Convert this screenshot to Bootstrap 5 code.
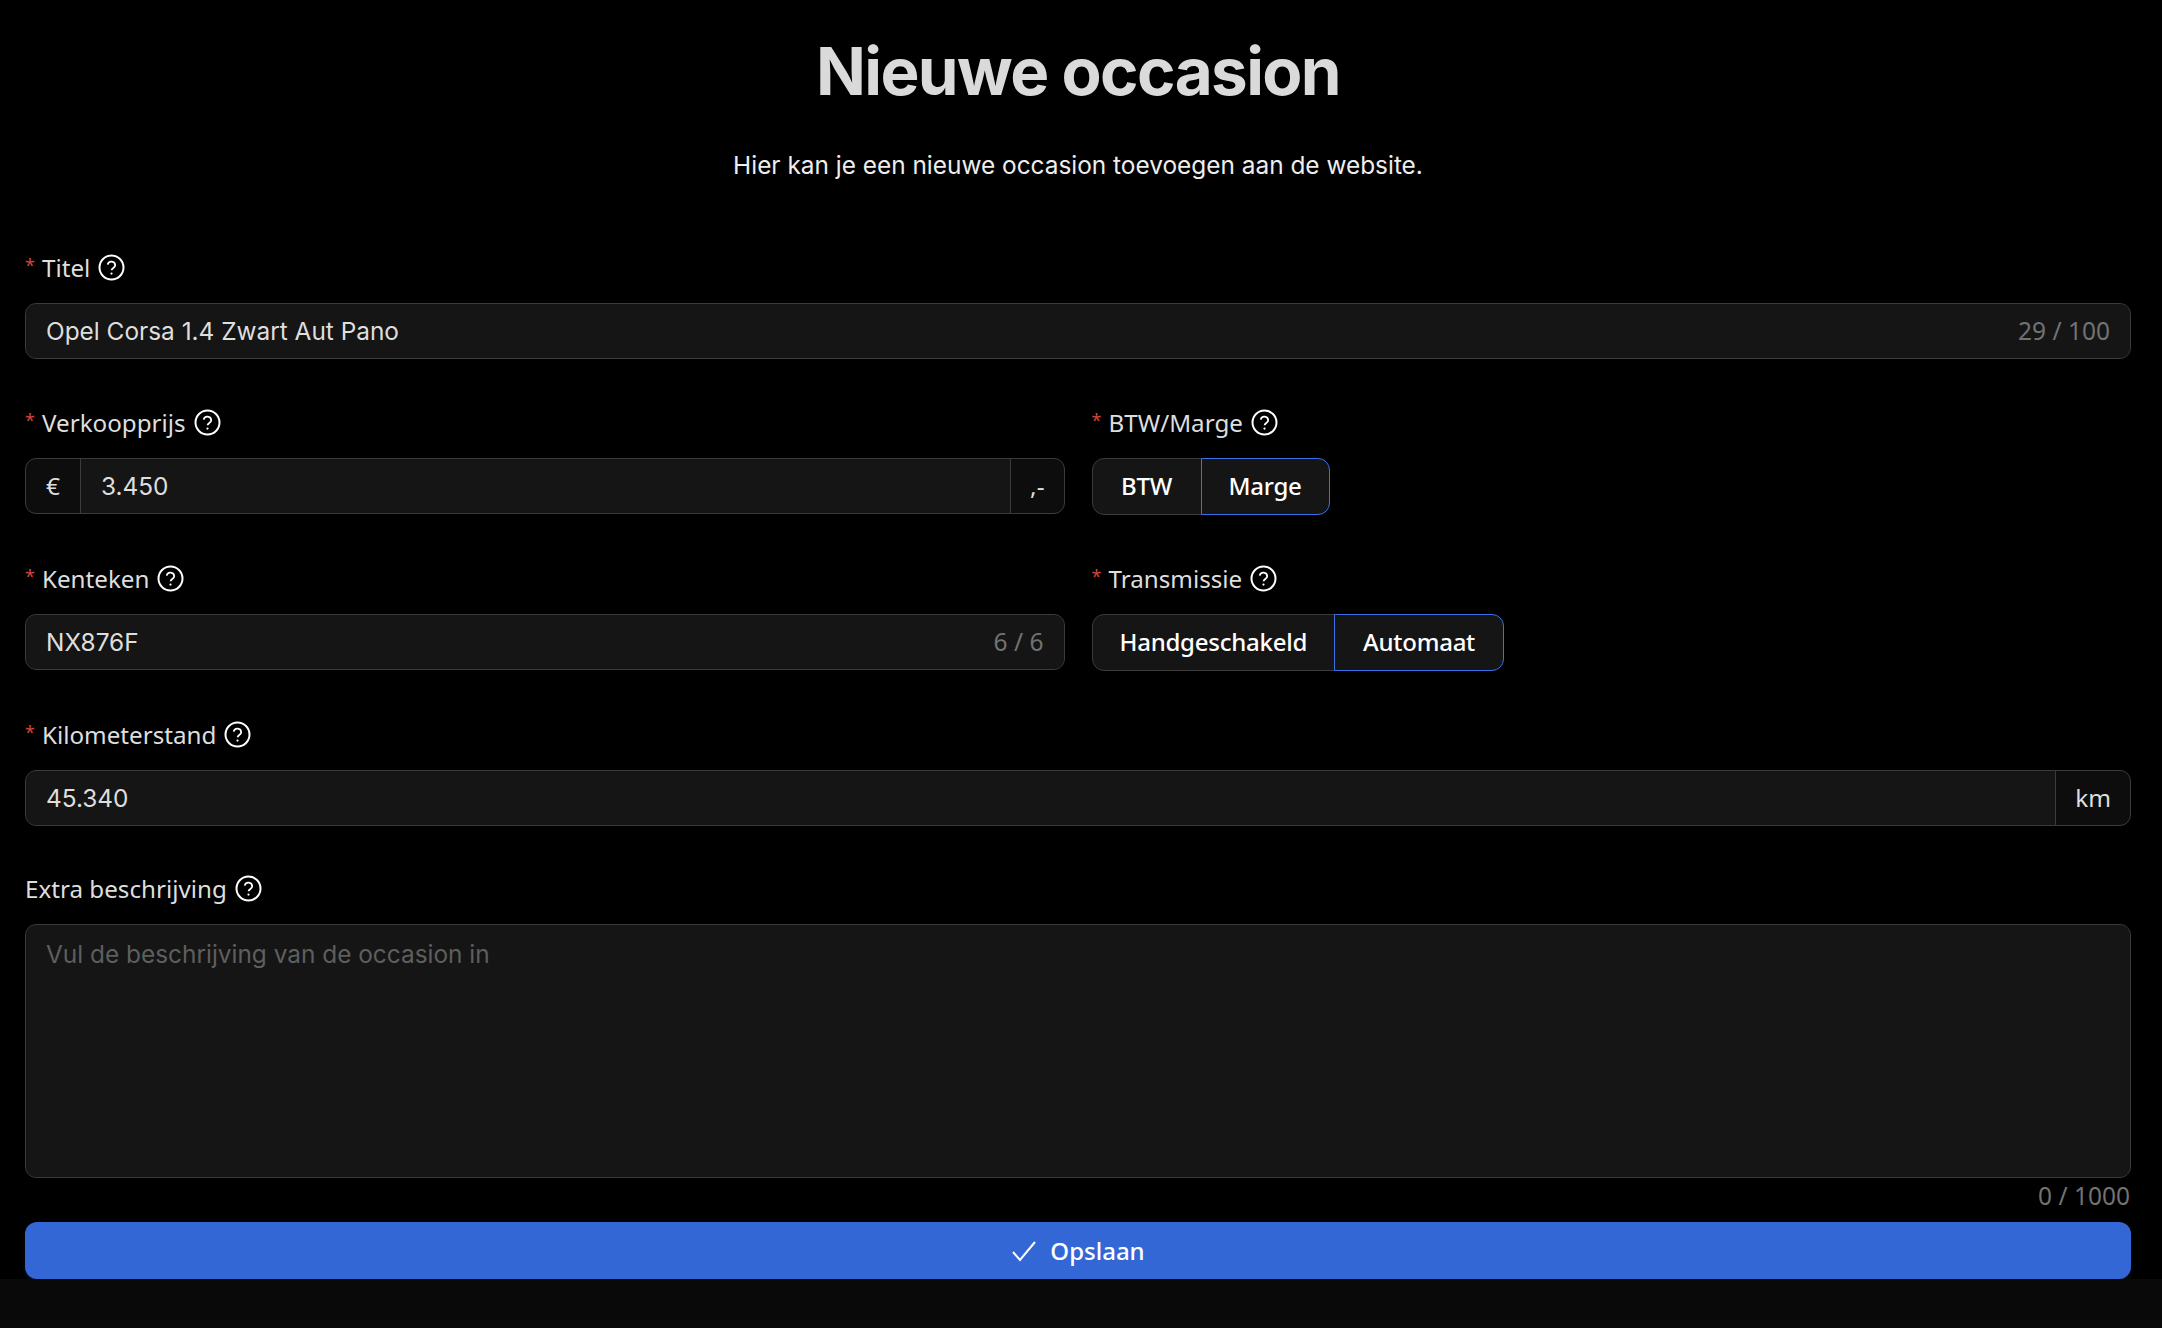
<!DOCTYPE html>
<html lang="nl">
<head>
    <meta charset="UTF-8">
    <title>Nieuwe occasion</title>
    <link href="https://cdn.jsdelivr.net/npm/bootstrap@5.3.2/dist/css/bootstrap.min.css" rel="stylesheet">
    <style>
        body {
            background-color: #090909;
            font-family: "Inter", "Liberation Sans", sans-serif;
        }
        .pagina {
            background-color: #000;
            height: 1279px;
            padding: 0 31px 0 25px;
        }
        .kop {
            color: #dadada;
            font-size: 65.5px;
            font-weight: 700;
            letter-spacing: -1.6px;
            line-height: 70px;
            padding-top: 37px;
            margin-bottom: 43px;
        }
        .intro {
            color: #eee;
            font-size: 24.4px;
            line-height: 30px;
            margin-bottom: 72px;
        }
        .veld {
            margin-bottom: 48px;
            position: relative;
        }
        .veld-laatste {
            margin-bottom: 47px;
        }
        .veld-rij {
            --bs-gutter-x: 27px;
        }
        .veld-label {
            color: #dedede;
            font-family: "Noto Sans", sans-serif;
            font-size: 24.2px;
            line-height: 30px;
            height: 30px;
            padding-top: 1px;
            margin-bottom: 21px;
            display: flex;
            align-items: center;
        }
        .ster {
            color: #d0453c;
            font-size: 18px;
            width: 17px;
            align-self: flex-start;
            line-height: 24px;
        }
        .hulp {
            width: 27px;
            height: 27px;
            margin-left: 8px;
            margin-top: -1px;
        }
        .form-control.veld-input, .input-group-text.veld-addon {
            height: 56px;
            border: 1px solid #3b3b3b;
            border-radius: 11px;
            font-size: 24.4px;
        }
        .form-control.veld-input {
            background-color: #151515;
            color: #dedede;
            padding: 0 20px;
            box-shadow: none;
        }
        .form-control.veld-tekst {
            height: 254px;
            padding-top: 11px;
            resize: none;
        }
        .form-control.veld-input::placeholder {
            color: #5e5e5e;
        }
        .input-group-text.veld-addon {
            background-color: #0d0d0d;
            color: #dedede;
            padding: 0 20px;
            font-family: "Noto Sans", sans-serif;
        }
        .input-group-text.veld-addon:last-child {
            padding: 0 19px;
        }
        .teller {
            color: #727272;
            font-family: "Noto Sans", sans-serif;
            font-size: 24.5px;
            line-height: 30px;
        }
        .teller-binnen {
            position: absolute;
            right: 21px;
            bottom: 13px;
        }
        .teller-onder {
            margin: 3px 1px 11px 0;
        }
        .keuze .btn {
            --bs-btn-border-radius: 12px;
            background-color: #151515;
            border: 1px solid #3b3b3b;
            color: #fff;
            font-family: "Noto Sans", sans-serif;
            font-size: 24px;
            font-weight: 500;
            letter-spacing: -.25px;
            height: 57px;
            padding: 0 27px 2px;
        }
        .keuze .btn.gekozen {
            border-color: #3a70e8;
            z-index: 1;
            position: relative;
        }
        .keuze .btn.knop-btw {
            min-width: 110px;
        }
        .keuze .btn.knop-automaat {
            min-width: 170px;
        }
        .opslaan.btn {
            background-color: #3367d6;
            border: 0;
            color: #fff;
            font-family: "Noto Sans", sans-serif;
            font-size: 24px;
            font-weight: 500;
            height: 57px;
            padding-bottom: 6px;
            border-radius: 12px;
            gap: 13px;
            box-shadow: 0 4px 4px rgba(51, 103, 214, .1);
        }
    </style>
</head>
<body>

<div class="pagina">
    <h1 class="kop text-center">Nieuwe occasion</h1>
    <p class="intro text-center">Hier kan je een nieuwe occasion toevoegen aan de website.</p>

    <form>
        <div class="veld">
            <label class="veld-label" for="titel"><span class="ster">*</span>Titel
                <svg class="hulp" viewBox="0 0 27 27" fill="none" stroke="#fff" stroke-width="2"><circle cx="13.5" cy="13.5" r="12"/><path d="M9.7 10.6a3.8 3.8 0 0 1 7.5.7c0 2.5-3.6 2.9-3.6 5" stroke-width="1.8"/><circle cx="13.5" cy="19.6" r="1.1" fill="#fff" stroke="none"/></svg>
            </label>
            <input id="titel" class="form-control veld-input" value="Opel Corsa 1.4 Zwart Aut Pano">
            <span class="teller teller-binnen">29 / 100</span>
        </div>

        <div class="row veld-rij">
            <div class="col-6">
                <div class="veld">
                    <label class="veld-label" for="prijs"><span class="ster">*</span>Verkoopprijs
                        <svg class="hulp" viewBox="0 0 27 27" fill="none" stroke="#fff" stroke-width="2"><circle cx="13.5" cy="13.5" r="12"/><path d="M9.7 10.6a3.8 3.8 0 0 1 7.5.7c0 2.5-3.6 2.9-3.6 5" stroke-width="1.8"/><circle cx="13.5" cy="19.6" r="1.1" fill="#fff" stroke="none"/></svg>
                    </label>
                    <div class="input-group">
                        <span class="input-group-text veld-addon">€</span>
                        <input id="prijs" class="form-control veld-input" value="3.450">
                        <span class="input-group-text veld-addon">,-</span>
                    </div>
                </div>
            </div>
            <div class="col-6">
                <div class="veld">
                    <div class="veld-label"><span class="ster">*</span>BTW/Marge
                        <svg class="hulp" viewBox="0 0 27 27" fill="none" stroke="#fff" stroke-width="2"><circle cx="13.5" cy="13.5" r="12"/><path d="M9.7 10.6a3.8 3.8 0 0 1 7.5.7c0 2.5-3.6 2.9-3.6 5" stroke-width="1.8"/><circle cx="13.5" cy="19.6" r="1.1" fill="#fff" stroke="none"/></svg>
                    </div>
                    <div class="btn-group keuze">
                        <button type="button" class="btn knop-btw">BTW</button>
                        <button type="button" class="btn gekozen">Marge</button>
                    </div>
                </div>
            </div>
        </div>

        <div class="row veld-rij">
            <div class="col-6">
                <div class="veld">
                    <label class="veld-label" for="kenteken"><span class="ster">*</span>Kenteken
                        <svg class="hulp" viewBox="0 0 27 27" fill="none" stroke="#fff" stroke-width="2"><circle cx="13.5" cy="13.5" r="12"/><path d="M9.7 10.6a3.8 3.8 0 0 1 7.5.7c0 2.5-3.6 2.9-3.6 5" stroke-width="1.8"/><circle cx="13.5" cy="19.6" r="1.1" fill="#fff" stroke="none"/></svg>
                    </label>
                    <input id="kenteken" class="form-control veld-input" value="NX876F">
                    <span class="teller teller-binnen">6 / 6</span>
                </div>
            </div>
            <div class="col-6">
                <div class="veld">
                    <div class="veld-label"><span class="ster">*</span>Transmissie
                        <svg class="hulp" viewBox="0 0 27 27" fill="none" stroke="#fff" stroke-width="2"><circle cx="13.5" cy="13.5" r="12"/><path d="M9.7 10.6a3.8 3.8 0 0 1 7.5.7c0 2.5-3.6 2.9-3.6 5" stroke-width="1.8"/><circle cx="13.5" cy="19.6" r="1.1" fill="#fff" stroke="none"/></svg>
                    </div>
                    <div class="btn-group keuze">
                        <button type="button" class="btn">Handgeschakeld</button>
                        <button type="button" class="btn gekozen knop-automaat">Automaat</button>
                    </div>
                </div>
            </div>
        </div>

        <div class="veld veld-laatste">
            <label class="veld-label" for="km"><span class="ster">*</span>Kilometerstand
                <svg class="hulp" viewBox="0 0 27 27" fill="none" stroke="#fff" stroke-width="2"><circle cx="13.5" cy="13.5" r="12"/><path d="M9.7 10.6a3.8 3.8 0 0 1 7.5.7c0 2.5-3.6 2.9-3.6 5" stroke-width="1.8"/><circle cx="13.5" cy="19.6" r="1.1" fill="#fff" stroke="none"/></svg>
            </label>
            <div class="input-group">
                <input id="km" class="form-control veld-input" value="45.340">
                <span class="input-group-text veld-addon">km</span>
            </div>
        </div>

        <div>
            <label class="veld-label" for="extra">Extra beschrijving
                <svg class="hulp" viewBox="0 0 27 27" fill="none" stroke="#fff" stroke-width="2"><circle cx="13.5" cy="13.5" r="12"/><path d="M9.7 10.6a3.8 3.8 0 0 1 7.5.7c0 2.5-3.6 2.9-3.6 5" stroke-width="1.8"/><circle cx="13.5" cy="19.6" r="1.1" fill="#fff" stroke="none"/></svg>
            </label>
            <textarea id="extra" class="form-control veld-input veld-tekst" placeholder="Vul de beschrijving van de occasion in"></textarea>
            <div class="teller teller-onder text-end">0 / 1000</div>
        </div>

        <button type="button" class="btn opslaan w-100 d-flex align-items-center justify-content-center">
            <svg width="26" height="22" viewBox="0 0 26 22" fill="none" stroke="#fff" stroke-width="2"><path d="M2 12l7 8L24 2"/></svg>
            Opslaan
        </button>
    </form>
</div>

<script src="https://cdn.jsdelivr.net/npm/bootstrap@5.3.2/dist/js/bootstrap.bundle.min.js"></script>
</body>
</html>
